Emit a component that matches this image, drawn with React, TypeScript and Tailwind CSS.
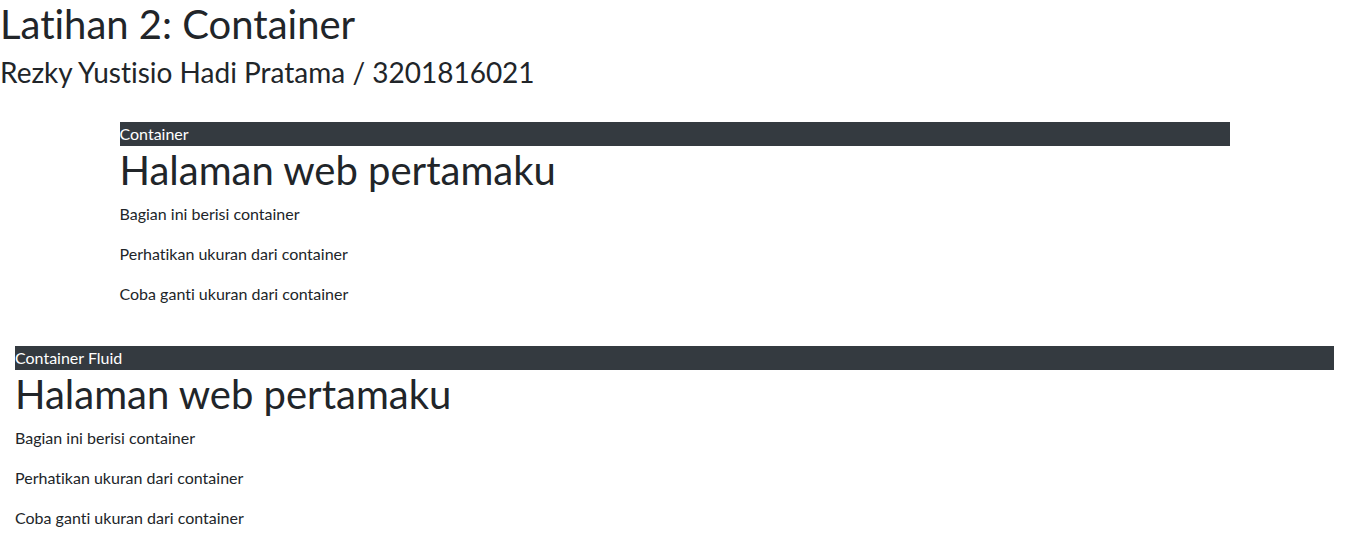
const sections = [
  { label: "Container", fluid: false },
  { label: "Container Fluid", fluid: true },
];

const lines = [
  "Bagian ini berisi container",
  "Perhatikan ukuran dari container",
  "Coba ganti ukuran dari container",
];

function Block({ label, fluid }: { label: string; fluid: boolean }) {
  return (
    <div className={fluid ? "w-full px-[15px]" : "mx-auto w-full max-w-[1140px] px-[15px]"}>
      <div className="bg-[#343a40] text-white">{label}</div>
      <h1 className="mb-2 text-[40px] leading-[1.2] font-normal">Halaman web pertamaku</h1>
      {lines.map((t) => (
        <p key={t} className="mb-4">
          {t}
        </p>
      ))}
    </div>
  );
}

export default function App() {
  return (
    <div className="min-h-screen bg-white font-['Lato',sans-serif] text-base leading-normal text-[#212529] [font-variant-ligatures:none]">
      <h1 className="mb-2 text-[40px] leading-[1.2] font-normal">Latihan 2: Container</h1>
      <h3 className="mb-2 text-[28px] leading-[1.2] font-normal">Rezky Yustisio Hadi Pratama / 3201816021</h3>
      <div className="h-6" />
      <Block {...sections[0]} />
      <div className="h-6" />
      <Block {...sections[1]} />
    </div>
  );
}
